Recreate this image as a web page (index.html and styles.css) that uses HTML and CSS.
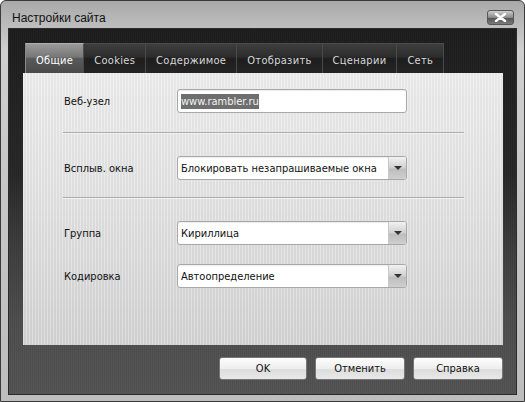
FILE: index.html
```html
<!DOCTYPE html>
<html lang="ru">
<head>
    <meta charset="UTF-8">
    <title>Настройки сайта</title>
    <link rel="stylesheet" href="styles.css">
</head>
<body>
    <div class="window">
        <div class="titlebar">
            <span class="title">Настройки сайта</span>
            <span class="close">
                <svg width="13" height="9" viewBox="0 0 13 9"><path d="M2 1 L11 8 M11 1 L2 8" stroke="#fff" stroke-width="2.4" stroke-linecap="round"/></svg>
            </span>
        </div>
        <div class="client">
            <div class="tabs">
                <a href="#" class="tab active">Общие</a>
                <a href="#" class="tab">Cookies</a>
                <a href="#" class="tab">Содержимое</a>
                <a href="#" class="tab">Отобразить</a>
                <a href="#" class="tab">Сценарии</a>
                <a href="#" class="tab">Сеть</a>
            </div>
            <div class="panel">
                <div class="row r1">
                    <label>Веб-узел</label>
                    <div class="field"><span class="sel">www.rambler.ru</span></div>
                </div>
                <div class="sep s1"></div>
                <div class="row r2">
                    <label>Всплыв. окна</label>
                    <div class="field combo"><span class="val">Блокировать незапрашиваемые окна</span><span class="arrow"></span></div>
                </div>
                <div class="sep s2"></div>
                <div class="row r3">
                    <label>Группа</label>
                    <div class="field combo"><span class="val">Кириллица</span><span class="arrow"></span></div>
                </div>
                <div class="row r4">
                    <label>Кодировка</label>
                    <div class="field combo"><span class="val">Автоопределение</span><span class="arrow"></span></div>
                </div>
            </div>
            <div class="buttons">
                <button class="btn ok">OK</button>
                <button class="btn">Отменить</button>
                <button class="btn">Справка</button>
            </div>
        </div>
    </div>
</body>
</html>
```

FILE: styles.css
```css
body { margin: 0; font-family: "DejaVu Sans Condensed", "DejaVu Sans", sans-serif; font-stretch: condensed; font-size: 11px; background: #fff; }
.window { border: 1px solid #3a3a3a; border-radius: 6px 6px 0 0; background: linear-gradient(#a9a9a9, #cfcfcf 12%, #c4c4c4 60%, #bdbdbd); padding: 0 7px 6px 7px; box-sizing: border-box; width: 525px; height: 402px; display: flex; flex-direction: column; }
.titlebar { height: 27px; display: flex; align-items: center; justify-content: space-between; padding: 0 3px 0 4px; }
.title { color: #111; font-family: "Liberation Sans", Arial, sans-serif; font-stretch: normal; font-size: 12px; margin-top: 6px; }
.close { width: 27px; height: 15px; border: 1px solid #555; border-radius: 3px; background: linear-gradient(#cfcfcf, #8a8a8a 50%, #555 55%, #7a7a7a); display: flex; align-items: center; justify-content: center; margin-top: 5px; box-sizing: border-box; }
.client { flex: 1; background: repeating-linear-gradient(90deg, rgba(255,255,255,0.025) 0 1px, rgba(0,0,0,0.03) 1px 2px), linear-gradient(#1c1c1c, #262626 40%, #3c3c3c 60%, #4c4c4c 80%, #525252); border: 1px solid #2a2a2a; padding: 14px 14px 0 14px; display: flex; flex-direction: column; }
.tabs { display: flex; height: 30px; padding-left: 2px; }
.tab { color: #d8d8d8; text-decoration: none; height: 30px; box-sizing: border-box; padding: 10px 10px 0 10px; background: linear-gradient(#3e3e3e, #2c2c2c 45%, #1e1e1e 50%, #242424); border-top: 1px solid #4a4a4a; border-right: 1px solid #4a4a4a; letter-spacing: 0.3px; }
.tab.active { color: #fff; background: linear-gradient(#9a9a9a, #777 45%, #5a5a5a 50%, #4a4a4a); border-top-color: #b0b0b0; border-left: 1px solid #8a8a8a; }
.panel { width: 480px; height: 272px; box-sizing: border-box; background: repeating-linear-gradient(90deg, rgba(255,255,255,0.25) 0 1px, rgba(0,0,0,0.02) 1px 3px), linear-gradient(#ececec, #e0e0e0 50%, #d2d2d2); padding: 16px 0 0 41px; }
.row { display: flex; align-items: center; height: 24px; }
.row label { width: 113px; color: #111; }
.field { width: 230px; height: 24px; box-sizing: border-box; border: 1px solid #a8a8a8; border-radius: 3px; background: #fff; display: flex; align-items: center; padding-left: 3px; box-shadow: inset 0 1px 1px rgba(0,0,0,0.08); color: #111; }
.sel { background: #6e6e6e; color: #f4f4f4; padding: 1px 0; }
.combo .val { flex: 1; white-space: nowrap; overflow: hidden; }
.arrow { width: 17px; height: 22px; border-left: 1px solid #c8c8c8; background: linear-gradient(#f2f2f2, #d0d0d0 50%, #bdbdbd 55%, #cfcfcf); border-radius: 0 2px 2px 0; position: relative; }
.arrow::after { content: ""; position: absolute; left: 5px; top: 9px; border-left: 4px solid transparent; border-right: 4px solid transparent; border-top: 4px solid #333; }
.sep { width: 401px; height: 1px; background: #aaa; border-bottom: 1px solid #f4f4f4; margin-left: -1px; }
.s1 { margin-top: 19px; }
.r2 { margin-top: 22px; }
.s2 { margin-top: 17px; }
.r3 { margin-top: 22px; }
.r4 { margin-top: 19px; }
.buttons { display: flex; justify-content: flex-end; gap: 8px; margin-top: 12px; width: 480px; }
.btn { width: 90px; height: 23px; font-family: inherit; font-stretch: condensed; font-size: 11px; color: #111; border: 1px solid #777; border-radius: 3px; background: linear-gradient(#fdfdfd, #eeeeee 50%, #dddddd 55%, #e8e8e8); padding: 0; }
.btn.ok { width: 88px; }
```
